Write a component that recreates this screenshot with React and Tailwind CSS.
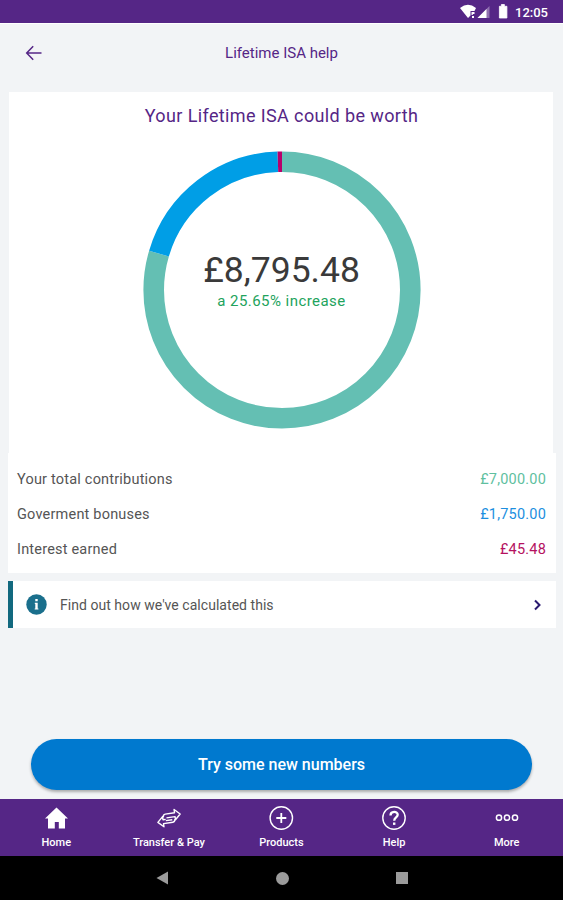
const SEGMENTS = [
  { label: 'Your total contributions', value: 7000, text: '£7,000.00', stroke: '#64bfb3', className: 'text-[#5fbf9f]' },
  { label: 'Goverment bonuses', value: 1750, text: '£1,750.00', stroke: '#009ee6', className: 'text-[#1c8fe0]' },
  { label: 'Interest earned', value: 45.48, text: '£45.48', stroke: '#b8006b', className: 'text-[#b5125f]' },
];

const StatusBar = () => (
  <div className="h-[23px] shrink-0 bg-[#552686] flex items-center justify-end pr-[15px] text-white">
    <svg width="54" height="23" viewBox="0 0 54 23">
      <path d="M0 8 Q8 1.5 16 8 L14.5 11 H10.5 V15.5 L8 18 Z" fill="#fff" />
      <path d="M11.5 12 H14.5 V14 H12.8 V15 H11.5 Z M12 16 H14 V18 H12 Z" fill="#fff" />
      <path d="M29.5 6 V18 H17.5 Z" fill="#fff" fillOpacity="0.35" />
      <path d="M26.5 9 V18 H17.5 Z" fill="#fff" />
      <path d="M39.4 6.3 H41.4 V4.5 H44.4 V6.3 H46.9 V18 H39.4 Z" fill="#fff" stroke="#fff" strokeWidth="0.8" strokeLinejoin="round" />
    </svg>
    <span className="w-[34px] text-right text-[13px] leading-none font-medium pt-[2px] whitespace-nowrap">12:05</span>
  </div>
);

const Header = () => (
  <div className="h-[69px] shrink-0 grid grid-cols-[82px_1fr_82px] items-center border-t border-white pb-[10px] text-[#552686]">
    <svg className="ml-[25px]" width="18" height="18" viewBox="0 0 18 18" fill="none" stroke="currentColor" strokeWidth="1.5">
      <path d="M16.5 9 H2 M8.2 2.3 L1.7 9 L8.2 15.7" />
    </svg>
    <h1 className="text-center text-[15px] leading-5">Lifetime ISA help</h1>
  </div>
);

const Donut = () => {
  const total = SEGMENTS.reduce((sum, item) => sum + item.value, 0);
  let offset = 0;

  return (
    <div className="grid place-items-center w-[278px] h-[278px] ml-[2px]">
      <svg className="col-start-1 row-start-1 -rotate-90" width="278" height="278" viewBox="0 0 278 278" fill="none">
        {SEGMENTS.map(item => {
          const length = (item.value / total) * 100;
          const start = offset;
          offset += length;
          return (
            <circle
              key={item.label}
              cx="139"
              cy="139"
              r="128.3"
              pathLength="100"
              stroke={item.stroke}
              strokeWidth="20.6"
              strokeDasharray={`${length} ${100 - length}`}
              strokeDashoffset={-start}
            />
          );
        })}
      </svg>
      <div className="col-start-1 row-start-1 text-center -mt-[18px] mr-[1px]">
        <div className="text-[35.5px] leading-[40px] text-[#3a3a3a]">£8,795.48</div>
        <div className="text-[15px] leading-[22px] tracking-[0.45px] text-[#22a35c]">a 25.65% increase</div>
      </div>
    </div>
  );
};

const NavItem = ({ label, children }) => (
  <div className="flex flex-col items-center text-white">
    <svg className="mt-[6px]" width="26" height="26" viewBox="0 0 26 26" fill="none" stroke="currentColor">
      {children}
    </svg>
    <span className="mt-[4px] pt-px text-[11px] leading-[14px] font-medium whitespace-nowrap">{label}</span>
  </div>
);

const BottomNav = () => (
  <nav className="h-[57px] shrink-0 bg-[#552686] grid grid-cols-5">
    <NavItem label="Home">
      <path d="M13.5 2.5 L25 13.5 H22 V23.5 H15.8 V17 H11.8 V23.5 H5 V13.5 H2 Z" fill="currentColor" stroke="none" />
    </NavItem>
    <NavItem label="Transfer & Pay">
      <g transform="rotate(-8 13 13)" strokeWidth="1.4" strokeLinejoin="round">
        <path d="M7.5 11.5 C7.5 9.4 8.2 8.6 9.8 8.6 H19.2 V5.3 L24.6 10.6 L19.2 15.6 V12.5 H10.5" />
        <path d="M18.5 15 C18.5 17 17.8 17.8 16.2 17.8 H6.8 V21 L1.4 15.8 L6.8 10.7 V13.9 H9.5" />
        <path d="M9.5 15.2 H16" />
      </g>
    </NavItem>
    <NavItem label="Products">
      <circle cx="13.3" cy="13" r="11.2" strokeWidth="1.4" />
      <path d="M13.3 8 V18 M8.3 13 H18.3" strokeWidth="1.8" />
    </NavItem>
    <NavItem label="Help">
      <circle cx="13" cy="13" r="11.2" strokeWidth="1.4" />
      <path d="M9.5 10.5 C9.5 5.8 16.7 5.8 16.7 9.8 C16.7 12.6 13.2 12.4 13.2 15.8" strokeWidth="2.3" />
      <path d="M12 17.5 H14.4 V19.9 H12 Z" fill="currentColor" stroke="none" />
    </NavItem>
    <NavItem label="More">
      <g strokeWidth="1.5">
        <circle cx="5" cy="12.7" r="2.6" />
        <circle cx="13" cy="12.7" r="2.6" />
        <circle cx="21" cy="12.7" r="2.6" />
      </g>
    </NavItem>
  </nav>
);

const SystemBar = () => (
  <div className="h-[44px] shrink-0 bg-black flex justify-center items-center gap-[107px] text-[#9b9b9b]">
    <svg width="13" height="14" viewBox="0 0 13 14"><path d="M12 0.5 V13.5 L0.5 7 Z" fill="currentColor" /></svg>
    <div className="w-[13px] h-[13px] rounded-full bg-[#9b9b9b]" />
    <div className="w-[12px] h-[12px] bg-[#9b9b9b]" />
  </div>
);

const App = () => (
  <div className="w-[563px] h-[900px] overflow-hidden flex flex-col bg-[#f2f4f6] font-['Roboto',sans-serif]">
    <StatusBar />
    <Header />

    <section className="ml-[9px] mr-[10px] h-[361px] shrink-0 bg-white flex flex-col items-center">
      <h2 className="mt-[12px] mb-[24px] pl-[1px] text-[18px] leading-[23px] tracking-[0.38px] text-[#552686]">Your Lifetime ISA could be worth</h2>
      <Donut />
    </section>

    <section className="ml-[8px] mr-[7px] h-[120px] shrink-0 bg-white pl-[9px] pr-[10px] pt-[9px] text-[14.5px] leading-[35px] tracking-[0.2px] text-[#555555]">
      {SEGMENTS.map(item => (
        <div key={item.label} className="flex justify-between">
          <span>{item.label}</span>
          <span className={item.className}>{item.text}</span>
        </div>
      ))}
    </section>

    <section className="mt-[8px] ml-[8px] mr-[7px] h-[47px] shrink-0 bg-white border-l-5 border-[#12697f] flex items-center pl-[13px] pr-[14px]">
      <svg width="21" height="21" viewBox="0 0 21 21">
        <circle cx="10.5" cy="10.5" r="10.2" fill="#1a6f8c" />
        <path d="M9.3 5 H11.7 V7.2 H9.3 Z M8.8 8.8 H11.7 V14.4 H12.4 V15.6 H8.7 V14.4 H9.3 V10 H8.8 Z" fill="#fff" />
      </svg>
      <span className="ml-[13px] pt-[2px] grow text-[14px] tracking-[0.04px] text-[#555555]">Find out how we've calculated this</span>
      <svg width="9" height="12" viewBox="0 0 9 12" fill="none" stroke="#2a1a70" strokeWidth="2">
        <path d="M2 1.5 L6.5 6 L2 10.5" />
      </svg>
    </section>

    <button className="mt-auto mb-[9px] ml-[31px] w-[501px] h-[51px] shrink-0 rounded-full bg-[#0079cf] text-white text-[16px] font-medium shadow-[0_2px_3px_rgba(0,0,0,0.3)]">
      Try some new numbers
    </button>
    <BottomNav />
    <SystemBar />
  </div>
);

export default App;
